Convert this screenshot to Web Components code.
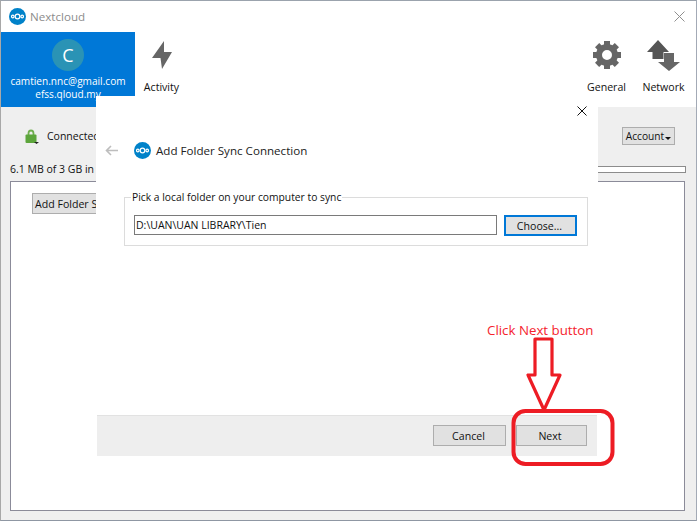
<!DOCTYPE html>
<html>
<head>
<meta charset="utf-8">
<title>Nextcloud</title>
<style>
    html, body { margin: 0; padding: 0; background: #fff; }
    body { font-family: "Open Sans", "Noto Sans", "Liberation Sans", sans-serif; font-size: 10.500px; color: #111; }
</style>
</head>
<body>
<app-window>
    <nc-titlebar slot="title"></nc-titlebar>
    <nc-toolbar slot="toolbar"></nc-toolbar>
    <account-page slot="main"></account-page>
    <sync-dialog slot="overlay"></sync-dialog>
    <click-hint slot="overlay"></click-hint>
</app-window>
<script>
class NcLogo extends HTMLElement {
    constructor() {
        super();
        this.attachShadow({ mode: 'open' });
        this.shadowRoot.innerHTML = `
            <style>
                :host { display: block; width: 17px; height: 17px; flex: none; }
                svg { display: block; width: 100%; height: 100%; }
            </style>
            <svg viewBox="0 0 34 34">
                <circle cx="17" cy="17" r="17" fill="#0082c9"/>
                <g fill="none" stroke="#fff" stroke-width="2.4">
                    <circle cx="17" cy="17" r="4.6"/>
                    <circle cx="7.6" cy="17" r="2.6"/>
                    <circle cx="26.4" cy="17" r="2.6"/>
                </g>
            </svg>
        `;
    }
}
customElements.define('nc-logo', NcLogo);

class PushButton extends HTMLElement {
    constructor() {
        super();
        this.attachShadow({ mode: 'open' });
        this.shadowRoot.innerHTML = `
            <style>
                :host {
                    display: flex;
                    align-items: center;
                    justify-content: center;
                    box-sizing: border-box;
                    height: 21px;
                    background: #e1e1e1;
                    border: 1px solid #adadad;
                    font-size: 10.600px;
                    color: #111;
                    white-space: nowrap;
                }
                :host([focused]) { border: 2px solid #0078d7; }
            </style>
            <slot></slot>
        `;
    }
}
customElements.define('push-button', PushButton);

class AppWindow extends HTMLElement {
    constructor() {
        super();
        this.attachShadow({ mode: 'open' });
        this.shadowRoot.innerHTML = `
            <style>
                :host {
                    display: flex;
                    flex-direction: column;
                    position: relative;
                    box-sizing: border-box;
                    width: 697px;
                    height: 521px;
                    overflow: hidden;
                    background: #efefef;
                    border-top: 1px solid #9ba3ad;
                    border-left: 1px solid #a8a8a8;
                    border-right: 1px solid #a3aab6;
                    border-bottom: 1px solid #8f97a3;
                }
                .edge {
                    position: absolute;
                    left: -1px;
                    top: 343px;
                    width: 1px;
                    height: 130px;
                    background: linear-gradient(to bottom,
                        #c87040 0 10px, #a8a8a8 10px 14px,
                        #c03a40 14px 43px, #a8a8a8 43px 46px,
                        #c03a40 46px 58px, #a8a8a8 58px 63px,
                        #c03a40 63px 68px, #2f6fb5 68px 71px, #a8a8a8 71px 83px,
                        #c0a878 83px 85px, #a8a8a8 85px 94px,
                        #2f6fb5 94px 95px, #a8a8a8 95px 106px,
                        #c03a40 106px 110px, #9aa3ad 110px);
                }
            </style>
            <slot name="title"></slot>
            <slot name="toolbar"></slot>
            <slot name="main"></slot>
            <slot name="overlay"></slot>
            <div class="edge"></div>
        `;
    }
}
customElements.define('app-window', AppWindow);

class NcTitlebar extends HTMLElement {
    constructor() {
        super();
        this.attachShadow({ mode: 'open' });
        this.shadowRoot.innerHTML = `
            <style>
                :host {
                    display: flex;
                    align-items: center;
                    height: 31px;
                    flex: none;
                    padding: 0 11px 0 8px;
                    gap: 4px;
                    background: #fff;
                }
                .name { font-size: 11.600px; color: #8c8c8c; flex: 1; }
                svg { display: block; }
            </style>
            <nc-logo></nc-logo>
            <span class="name">Nextcloud</span>
            <svg width="11" height="11" viewBox="0 0 11 11">
                <path d="M.5.5l10 10M10.500.5l-10 10" stroke="#8f8f8f" fill="none"/>
            </svg>
        `;
    }
}
customElements.define('nc-titlebar', NcTitlebar);

class ToolAction extends HTMLElement {
    constructor() {
        super();
        this.attachShadow({ mode: 'open' });
        this.shadowRoot.innerHTML = `
            <style>
                :host {
                    display: flex;
                    flex-direction: column;
                    align-items: center;
                    width: 57px;
                    flex: none;
                }
                .icon { height: 40px; margin-top: 3px; display: flex; align-items: center; }
                .label { font-size: 10.600px; line-height: 14px; margin-top: 5px; color: #111; }
            </style>
            <div class="icon"><slot name="icon"></slot></div>
            <div class="label"><slot></slot></div>
        `;
    }
}
customElements.define('tool-action', ToolAction);

class AccountTab extends HTMLElement {
    constructor() {
        super();
        this.attachShadow({ mode: 'open' });
        this.shadowRoot.innerHTML = `
            <style>
                :host {
                    display: flex;
                    flex-direction: column;
                    align-items: center;
                    width: 134px;
                    flex: none;
                    background: #0078d7;
                    color: #fff;
                    font-size: 10.100px;
                    line-height: 13px;
                }
                .avatar {
                    width: 32px;
                    height: 32px;
                    margin: 7px 0 4px;
                    border-radius: 50%;
                    background: #2a93b5;
                    display: flex;
                    align-items: center;
                    justify-content: center;
                    font-size: 18px;
                }
            </style>
            <div class="avatar">C</div>
            <div>camtien.nnc@gmail.com</div>
            <div>efss.qloud.my</div>
        `;
    }
}
customElements.define('account-tab', AccountTab);

class NcToolbar extends HTMLElement {
    constructor() {
        super();
        this.attachShadow({ mode: 'open' });
        const teeth = [0, 45, 90, 135, 180, 225, 270, 315]
            .map(a => `<rect x="11" y="0" width="6" height="6" transform="rotate(${a} 14 14)"/>`)
            .join('');
        this.shadowRoot.innerHTML = `
            <style>
                :host {
                    display: flex;
                    height: 75px;
                    flex: none;
                    background: #fff;
                }
                .spacer { flex: 1; }
                .pad { width: 4px; flex: none; }
                .activity { margin-left: -2px; }
                svg { display: block; }
            </style>
            <account-tab></account-tab>
            <tool-action class="activity">
                <svg slot="icon" width="21" height="30" viewBox="-1 0 21 30">
                    <path d="M12 1L0 18h8.500L10 29 20 12h-8z" fill="#666"/>
                </svg>
                Activity
            </tool-action>
            <div class="spacer"></div>
            <tool-action>
                <svg slot="icon" width="28" height="28" viewBox="0 0 28 28">
                    <g fill="#666">${teeth}</g>
                    <circle cx="14" cy="14" r="8" fill="none" stroke="#666" stroke-width="6"/>
                </svg>
                General
            </tool-action>
            <tool-action>
                <svg slot="icon" width="33" height="31" viewBox="0 0 33 31">
                    <path d="M11 0l11 12h-5.500v7h-11v-7H0z" fill="#555"/>
                    <path d="M17 13h10v9h6L22 31 11 22h6z" fill="#666"/>
                </svg>
                Network
            </tool-action>
            <div class="pad"></div>
        `;
    }
}
customElements.define('nc-toolbar', NcToolbar);

class AccountPage extends HTMLElement {
    constructor() {
        super();
        this.attachShadow({ mode: 'open' });
        this.shadowRoot.innerHTML = `
            <style>
                :host {
                    display: flex;
                    flex-direction: column;
                    flex: 1;
                    min-height: 0;
                    padding: 20px 11px 9px 9px;
                    font-size: 10.500px;
                }
                .status {
                    display: flex;
                    align-items: center;
                    height: 18px;
                    padding: 0 10px 0 15px;
                }
                .status .text { flex: 1; margin-left: 7px; white-space: nowrap; }
                .account { width: 53px; height: 18px; background: #e1e1e1; border: 1px solid #adadad; box-sizing: border-box; display: flex; align-items: center; justify-content: center; gap: 1px; font-size: 10.200px; }
                .caret { width: 0; height: 0; border: 3px solid transparent; border-top-color: #111; border-bottom: 0; margin-top: 5px; }
                .usage {
                    display: flex;
                    align-items: center;
                    gap: 8px;
                    height: 12px;
                    margin: 18px -1px 0 0;
                }
                .usage .bar {
                    flex: 1;
                    height: 7px;
                    background: #fff;
                    border: 1px solid #8c8c8c;
                    box-sizing: border-box;
                }
                .panel {
                    flex: 1;
                    margin-top: 6px;
                    background: #fff;
                    border: 1px solid #8b8b99;
                    padding: 11px 21px;
                }
                .panel push-button { width: 90px; justify-content: flex-start; padding-left: 2px; }
                svg { display: block; flex: none; }
            </style>
            <div class="status">
                <svg width="15" height="15" viewBox="0 0 15 15">
                    <path d="M3.500 6V4.500a2.500 3 0 0 1 5 0V6" fill="none" stroke="#6fae4e" stroke-width="1.800"/>
                    <rect x="0.500" y="5.500" width="11" height="8.500" rx="1" fill="#5da53c"/>
                    <path d="M9 13h5l-2.500 2z" fill="#222"/>
                </svg>
                <span class="text">Connected</span>
                <div class="account">Account<span class="caret"></span></div>
            </div>
            <div class="usage">
                <span>6.1 MB of 3 GB in use</span>
                <div class="bar"></div>
            </div>
            <div class="panel">
                <push-button>Add Folder Sync</push-button>
            </div>
        `;
    }
}
customElements.define('account-page', AccountPage);

class SyncDialog extends HTMLElement {
    constructor() {
        super();
        this.attachShadow({ mode: 'open' });
        this.shadowRoot.innerHTML = `
            <style>
                :host {
                    position: absolute;
                    left: 95px;
                    top: 95px;
                    width: 502px;
                    height: 360px;
                    display: flex;
                    flex-direction: column;
                    background: #fff;
                    font-size: 10.500px;
                }
                .close {
                    align-self: flex-end;
                    margin: 10px 11px 0 0;
                }
                .head {
                    display: flex;
                    align-items: center;
                    margin: 26px 0 0 9px;
                    height: 17px;
                }
                .back { margin-right: 16px; }
                .title { font-size: 11.600px; margin-left: 5px; color: #222; }
                .group {
                    position: relative;
                    margin: 38px 10px 0 28px;
                    height: 49px;
                    box-sizing: border-box;
                    border: 1px solid #dcdcdc;
                    display: flex;
                    align-items: flex-start;
                    gap: 7px;
                    padding: 17px 10px 0 9px;
                }
                .legend {
                    position: absolute;
                    top: -8px;
                    left: 6px;
                    background: #fff;
                    padding: 0 1px;
                    line-height: 15px;
                    font-size: 10.300px;
                }
                .field {
                    flex: 1;
                    box-sizing: border-box;
                    height: 20px;
                    border: 1px solid #7a7a7a;
                    padding-left: 1px;
                    line-height: 19px;
                    white-space: nowrap;
                }
                .choose { width: 73px; padding-right: 2px; }
                .footer {
                    margin: auto 1px 0 1px;
                    height: 41px;
                    box-sizing: border-box;
                    border-top: 1px solid #e2e2e2;
                    background: #eeeeee;
                    display: flex;
                    justify-content: flex-end;
                    align-items: center;
                    gap: 10px;
                    padding: 0 10px 1px 0;
                }
                .footer push-button { width: 73px; padding-right: 2px; }
                .footer .next { width: 71px; padding-right: 3px; }
                svg { display: block; flex: none; }
            </style>
            <svg class="close" width="10" height="10" viewBox="0 0 10 10">
                <path d="M.5.5l9 9M9.500.5l-9 9" stroke="#111" fill="none"/>
            </svg>
            <div class="head">
                <svg class="back" width="13" height="11" viewBox="0 0 13 11">
                    <path d="M6 1L1.500 5.500 6 10M2 5.500h11" stroke="#bdbdbd" stroke-width="1.600" fill="none"/>
                </svg>
                <nc-logo></nc-logo>
                <span class="title">Add Folder Sync Connection</span>
            </div>
            <div class="group">
                <span class="legend">Pick a local folder on your computer to sync</span>
                <div class="field">D:\\UAN\\UAN LIBRARY\\Tien</div>
                <push-button class="choose" focused>Choose...</push-button>
            </div>
            <div class="footer">
                <push-button>Cancel</push-button>
                <push-button class="next">Next</push-button>
            </div>
        `;
    }
}
customElements.define('sync-dialog', SyncDialog);

class ClickHint extends HTMLElement {
    constructor() {
        super();
        this.attachShadow({ mode: 'open' });
        this.shadowRoot.innerHTML = `
            <style>
                :host { position: absolute; left: 485px; top: 321px; width: 132px; height: 147px; pointer-events: none; }
                .text { position: absolute; left: 1px; top: 0; color: #f5222d; font-size: 13.300px; line-height: 16px; white-space: nowrap; }
                svg { position: absolute; left: 0; top: 1px; }
            </style>
            <span class="text">Click Next button</span>
            <svg width="132" height="146" viewBox="0 0 132 146">
                <path d="M49 16h17v36h8L58 87 42 52h7z" fill="none" stroke="#ed1c24" stroke-width="3.200" stroke-linejoin="round"/>
                <rect x="27.500" y="88" width="99" height="53" rx="12" fill="none" stroke="#ed1c24" stroke-width="4"/>
            </svg>
        `;
    }
}
customElements.define('click-hint', ClickHint);
</script>
</body>
</html>
